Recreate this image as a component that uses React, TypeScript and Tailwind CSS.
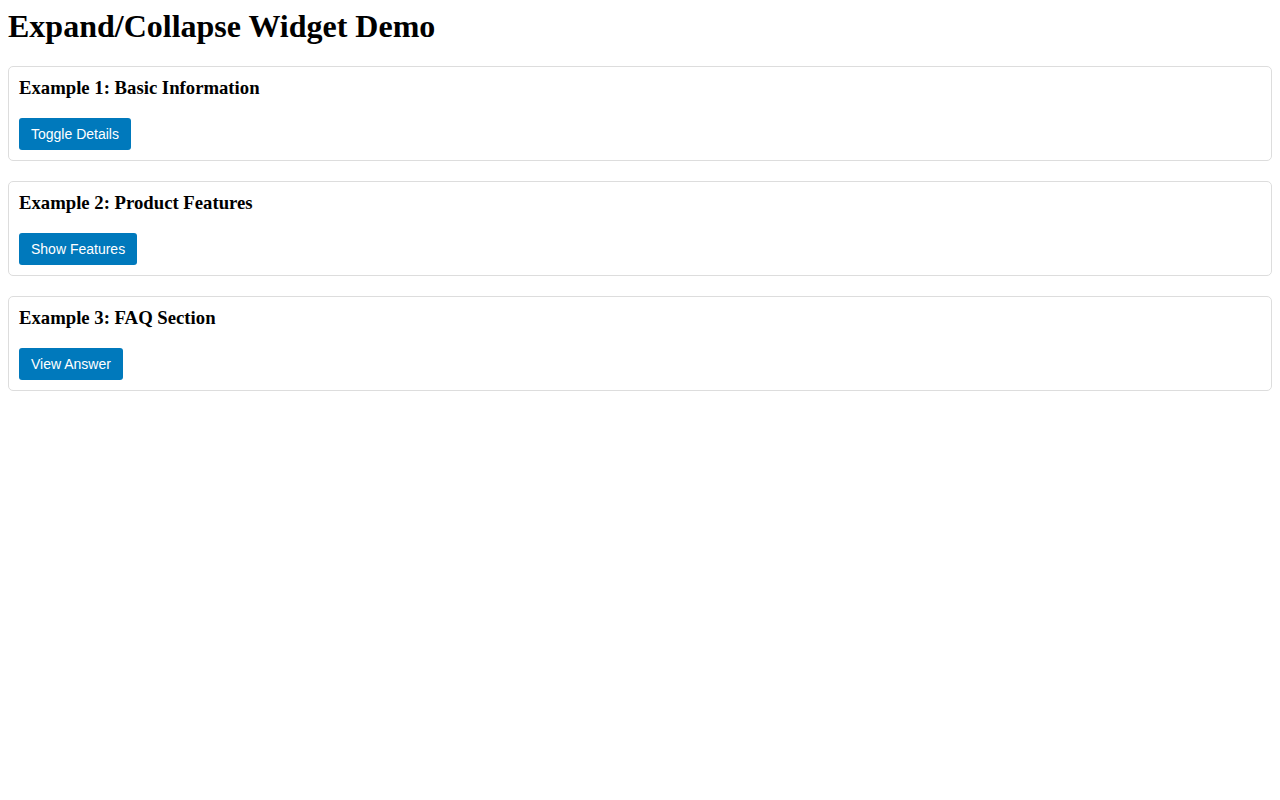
const examples = [
  { title: "Example 1: Basic Information", button: "Toggle Details" },
  { title: "Example 2: Product Features", button: "Show Features" },
  { title: "Example 3: FAQ Section", button: "View Answer" },
];

export default function App() {
  return (
    <div className="min-h-screen bg-white p-2 font-['Liberation_Serif',serif] text-black">
      <h1 className="mb-[21.44px] text-[32px] font-bold leading-[37px]">
        Expand/Collapse Widget Demo
      </h1>
      <div className="flex flex-col gap-5">
        {examples.map((ex) => (
          <div
            key={ex.title}
            className="rounded-[5px] border border-[#dddddd] p-[10px]"
          >
            <h3 className="mb-[18.72px] text-[18.72px] font-bold leading-[22px]">
              {ex.title}
            </h3>
            <button
              type="button"
              className="rounded-[3px] bg-[#0079bc] px-3 py-2 font-['Liberation_Sans',Arial,sans-serif] text-sm leading-4 text-white"
            >
              {ex.button}
            </button>
          </div>
        ))}
      </div>
    </div>
  );
}
